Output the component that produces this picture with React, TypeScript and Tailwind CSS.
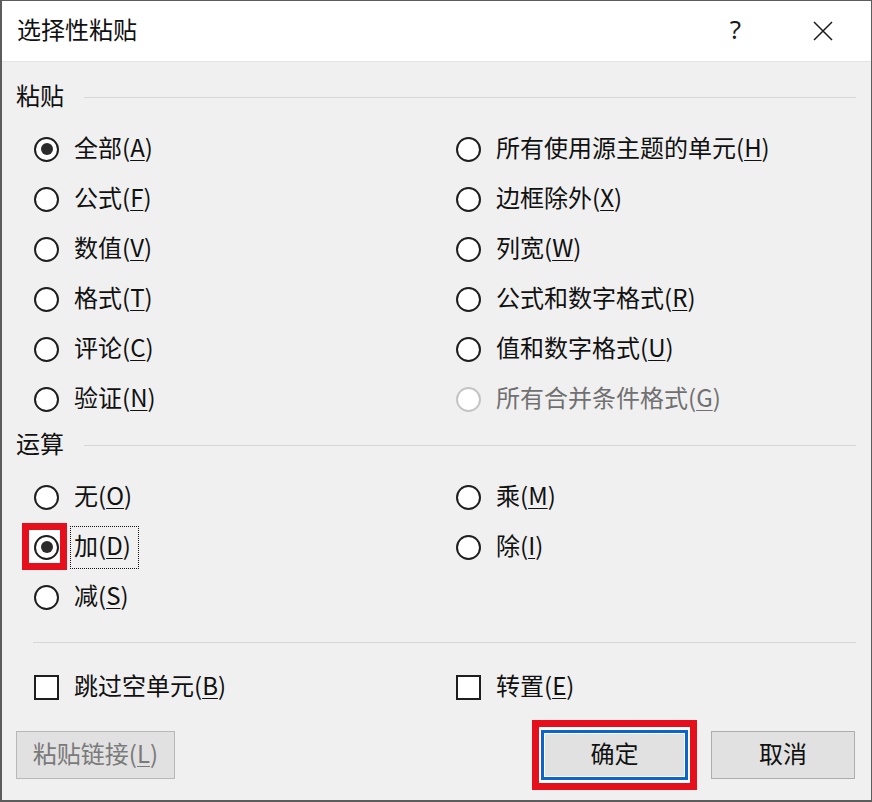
import React from "react";

type Item = { t: string; m: string; checked?: boolean; disabled?: boolean; hl?: boolean; focus?: boolean };

function Radio({ checked, disabled, hl }: { checked?: boolean; disabled?: boolean; hl?: boolean }) {
  return (
    <span className="relative w-[25px] h-[25px] shrink-0">
      {hl && (
        <span className="absolute left-[-12px] top-[-12px] w-[45px] h-[47px] border-[7px] border-[#e5101b] bg-white" />
      )}
      <span
        className={`absolute inset-0 rounded-full border-2 bg-white flex items-center justify-center ${
          disabled ? "border-[#c4c4c4]" : "border-[#1e1e1e]"
        }`}
      >
        {checked && <span className="w-[12px] h-[12px] rounded-full bg-[#2b2b2b]" />}
      </span>
    </span>
  );
}

function Label({ t, m, disabled }: { t: string; m: string; disabled?: boolean }) {
  return (
    <span className={`text-[24px] leading-[32px] pb-[4px] whitespace-nowrap ${disabled ? "text-[#707070]" : "text-[#111]"}`}>
      {t}(<span className="underline decoration-1 underline-offset-[3px]">{m}</span>)
    </span>
  );
}

function RadioRow({ item }: { item?: Item }) {
  if (!item) return <div className="h-[50px]" />;
  return (
    <div className="h-[50px] flex items-center gap-[15px]">
      <Radio checked={item.checked} disabled={item.disabled} hl={item.hl} />
      {item.focus ? (
        <span className="-ml-[4px] pl-[3px] pr-[7px] h-[43px] flex items-center border border-dotted border-[#111]">
          <Label t={item.t} m={item.m} disabled={item.disabled} />
        </span>
      ) : (
        <Label t={item.t} m={item.m} disabled={item.disabled} />
      )}
    </div>
  );
}

function GroupHeader({ title }: { title: string }) {
  return (
    <div className="h-[32px] flex items-center pl-[14px] pr-[15px]">
      <span className="text-[24px] leading-[32px] pb-[4px] text-[#111]">{title}</span>
      <span className="flex-1 ml-[20px] h-px bg-[#d7d7d7]" />
    </div>
  );
}

function Grid({ rows }: { rows: [Item, Item | undefined][] }) {
  return (
    <div className="grid grid-cols-[422px_1fr] pl-[32px]">
      {rows.map(([a, b], i) => (
        <React.Fragment key={i}>
          <RadioRow item={a} />
          <RadioRow item={b} />
        </React.Fragment>
      ))}
    </div>
  );
}

function Checkbox({ t, m }: { t: string; m: string }) {
  return (
    <div className="h-[50px] flex items-center gap-[15px]">
      <span className="w-[25px] h-[25px] shrink-0 border-2 border-[#1e1e1e] bg-white" />
      <Label t={t} m={m} />
    </div>
  );
}

export default function App() {
  const paste: [Item, Item | undefined][] = [
    [{ t: "全部", m: "A", checked: true }, { t: "所有使用源主题的单元", m: "H" }],
    [{ t: "公式", m: "F" }, { t: "边框除外", m: "X" }],
    [{ t: "数值", m: "V" }, { t: "列宽", m: "W" }],
    [{ t: "格式", m: "T" }, { t: "公式和数字格式", m: "R" }],
    [{ t: "评论", m: "C" }, { t: "值和数字格式", m: "U" }],
    [{ t: "验证", m: "N" }, { t: "所有合并条件格式", m: "G", disabled: true }],
  ];
  const ops: [Item, Item | undefined][] = [
    [{ t: "无", m: "O" }, { t: "乘", m: "M" }],
    [{ t: "加", m: "D", checked: true, hl: true, focus: true }, { t: "除", m: "I" }],
    [{ t: "减", m: "S" }, undefined],
  ];

  return (
    <div className="w-[872px] h-[802px] overflow-hidden bg-[#f0f0f0] border-l-2 border-t border-r border-b-2 border-[#5c5c5c] flex flex-col font-['Noto_Sans_CJK_SC','Noto_Sans',sans-serif] text-[#111]">
      {/* title bar */}
      <div className="h-[61px] shrink-0 bg-white border-b border-[#e4e4e4] flex items-center pl-[15px]">
        <span className="text-[24px] leading-[32px] pb-[4px] text-[#111]">选择性粘贴</span>
        <span className="ml-auto mr-[71px] text-[26px] leading-[32px] pb-[4px] text-[#1a1a1a] font-['Noto_Sans',sans-serif]">?</span>
        <span className="mr-[37px] w-[22px] h-[22px] flex items-center justify-center">
          <svg width="22" height="22" viewBox="0 0 22 22">
            <path d="M2 2 L20 20 M20 2 L2 20" stroke="#1a1a1a" strokeWidth="1.5" fill="none" />
          </svg>
        </span>
      </div>

      <div className="mt-[19px]">
        <GroupHeader title="粘贴" />
      </div>
      <div className="mt-[11px]">
        <Grid rows={paste} />
      </div>

      <div className="mt-[5px]">
        <GroupHeader title="运算" />
      </div>
      <div className="mt-[11px]">
        <Grid rows={ops} />
      </div>

      <div className="mt-[20px] ml-[31px] mr-[15px] h-px bg-[#d7d7d7]" />

      <div className="mt-[19px] grid grid-cols-[422px_1fr] pl-[32px]">
        <Checkbox t="跳过空单元" m="B" />
        <Checkbox t="转置" m="E" />
      </div>

      <div className="mt-[8px] h-[70px] flex items-center pl-[14px] pr-[16px]">
        <div className="w-[159px] h-[48px] pb-[4px] border border-[#b8b8b8] bg-[#e1e1e1] flex items-center justify-center text-[24px] text-[#7a7a7a]">
          粘贴链接(<span className="underline decoration-1 underline-offset-[3px]">L</span>)
        </div>
        <div className="ml-auto w-[165px] h-[70px] border-[7px] border-[#e5101b] bg-white flex items-center justify-center">
          <div className="w-[147px] h-[50px] pb-[4px] border-[3px] border-[#0a66cc] bg-[#e1e1e1] shadow-[inset_0_0_0_1px_#ffffff] flex items-center justify-center text-[24px] text-[#111]">
            确定
          </div>
        </div>
        <div className="ml-[14px] w-[144px] h-[48px] pb-[4px] border border-[#adadad] bg-[#e1e1e1] flex items-center justify-center text-[24px] text-[#111]">
          取消
        </div>
      </div>
    </div>
  );
}
